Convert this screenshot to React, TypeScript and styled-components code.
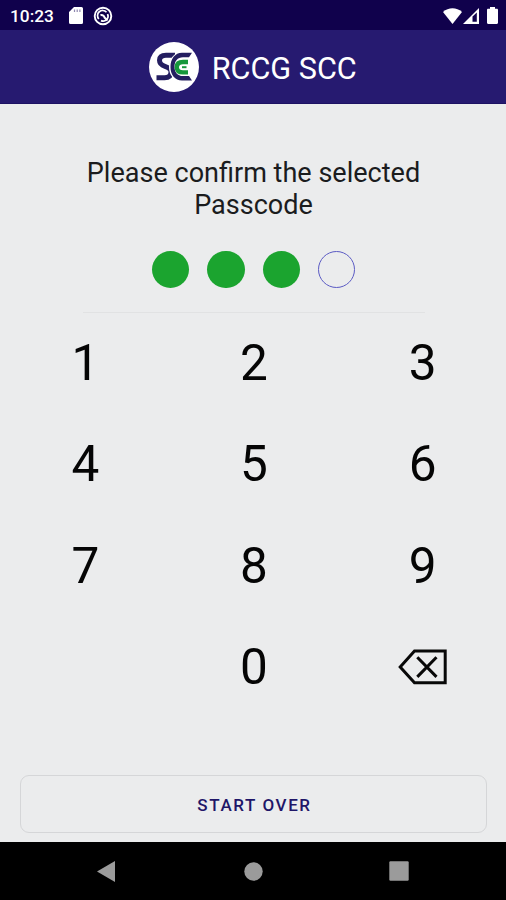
import React, { useState } from 'react';
import styled, { createGlobalStyle } from 'styled-components';

const GlobalStyle = createGlobalStyle`
  * { box-sizing: border-box; }
  html, body { margin: 0; padding: 0; background: #ebeced; }
  body { font-family: Roboto, "Liberation Sans", sans-serif; overflow: hidden; }
  button { font-family: inherit; border: 0; padding: 0; background: none; cursor: pointer; }
  svg { display: block; }
`;

const Screen = styled.div`
  display: flex;
  flex-direction: column;
  width: 506px;
  height: 900px;
  background: #ebeced;
`;

const StatusBar = styled.div`
  display: flex;
  align-items: center;
  justify-content: space-between;
  height: 30px;
  padding: 1px 8px 0 10px;
  background: #10014c;
  color: #fff;
`;

const StatusGroup = styled.div`
  display: flex;
  align-items: center;
`;

const Clock = styled.span`
  width: 58px;
  font-size: 17.3px;
  font-weight: 500;
  line-height: 20px;
  white-space: nowrap;
`;

const StatusIcon = styled.span<{ $before?: number }>`
  margin-left: ${(p) => p.$before ?? 0}px;
`;

const Header = styled.header`
  display: flex;
  align-items: center;
  height: 74px;
  padding: 1px 0 0 149px;
  gap: 12.7px;
  background: #261a70;
  border-bottom: 1px solid #1d1263;
`;

const Title = styled.h1`
  margin: 4px 0 0;
  color: #fff;
  font-size: 30.6px;
  font-weight: 400;
  line-height: 36px;
  white-space: nowrap;
`;

const Content = styled.main`
  display: flex;
  flex: 1;
  flex-direction: column;
  align-items: center;
  padding: 54px 0 9px 1px;
`;

const Prompt = styled.p`
  width: 380px;
  margin: 0;
  color: #1b1c1e;
  font-size: 27.05px;
  line-height: 31.5px;
  text-align: center;
`;

const Dots = styled.div`
  display: flex;
  gap: 18px;
  margin-top: 30.3px;
`;

const Dot = styled.span<{ $filled: boolean }>`
  width: 37.2px;
  height: 37.2px;
  border-radius: 50%;
  border: ${(p) => (p.$filled ? '0' : '1px solid #5b5bc4')};
  background: ${(p) => (p.$filled ? '#1ba42f' : 'transparent')};
`;

const Divider = styled.hr`
  width: 342px;
  height: 1px;
  margin: 24px 0 0;
  border: 0;
  background: #e1e2e3;
`;

const Keypad = styled.div`
  display: grid;
  grid-template-columns: repeat(3, 168.67px);
  grid-auto-rows: 101.3px;
  margin-top: -1px;
  padding-left: 1px;
`;

const Key = styled.button`
  display: flex;
  align-items: center;
  justify-content: center;
  color: #050505;
  font-size: 49.5px;
  line-height: 58px;
`;

const StartOver = styled.button`
  width: 467px;
  height: 58px;
  margin-top: auto;
  padding: 2px 0 0 2px;
  border: 1px solid #d5d6d8;
  border-radius: 9px;
  color: #1f1668;
  font-size: 17px;
  font-weight: 500;
  letter-spacing: 1.6px;
`;

const NavBar = styled.nav`
  display: flex;
  align-items: center;
  height: 58px;
  padding-left: 97px;
  background: #000;
`;

const NavButton = styled.button<{ $before?: number }>`
  display: flex;
  align-items: center;
  height: 58px;
  margin-left: ${(p) => p.$before ?? 0}px;
`;

const Logo = () => (
  <svg width="50" height="50" viewBox="0 0 50 50" fill="none" aria-label="SCC logo">
    <circle cx="25" cy="25" r="25" fill="#fff" />
    <path d="M26 13.2h-9c-4.500 0-6.500 2-6.500 5s2 5 5.500 6.100c4 1.200 6 2.800 6 5.700 0 3.800-2.500 5.700-6.500 5.700H7.500" stroke="#241e60" strokeWidth="5" />
    <path d="M42 13h-8c-7 0-11 5-11 12s4 11.500 11 11.500h8" stroke="#fff" strokeWidth="6" />
    <path d="M43 10.800L40 15.200H34c-5.500 0-8.500 4-8.500 9.500s3 9.300 8.500 9.300h6L43 38.500H33c-7 0-11.500-5.500-11.500-13.500S26 10.800 33 10.800z" fill="#241e60" />
    <path d="M39 20H34c-4 0-6.200 2-6.200 5.200s2.200 5.200 6.200 5.200h5" stroke="#16973b" strokeWidth="4.400" />
    <path d="M33 25.200h4.500" stroke="#16973b" strokeWidth="2" />
  </svg>
);

const SdCardIcon = () => (
  <svg width="14" height="17" viewBox="0 0 14 17">
    <path d="M5 0h7.500A1.500 1.500 0 0 1 14 1.500v14a1.500 1.500 0 0 1-1.500 1.500h-11A1.500 1.500 0 0 1 0 15.500V5z" fill="#fff" />
    <path d="M5.500 2.500v2.500M8.200 2.500v2.500M10.900 2.500v2.500" stroke="#8f88b0" strokeWidth="1.200" />
  </svg>
);

const CaptureIcon = () => (
  <svg width="20" height="20" viewBox="0 0 20 20" fill="none" stroke="#fff">
    <circle cx="10" cy="10" r="8.300" strokeWidth="1.900" />
    <path d="M5.800 13A5 5 0 0 1 13.500 6.200M14.600 8A5 5 0 0 1 8 14.600" strokeWidth="1.700" />
    <path d="M7.500 9.300C9.500 8.500 11.500 10 11.500 11.500L14.500 14.500" strokeWidth="2" />
  </svg>
);

const WifiIcon = () => (
  <svg width="19" height="16" viewBox="0 0 19 16">
    <path d="M0 4C5.500-1 13.500-1 19 4L9.500 16z" fill="#fff" />
  </svg>
);

const SignalIcon = () => (
  <svg width="16" height="16" viewBox="0 0 16 16">
    <path d="M0 16L16 0v16z" fill="#fff" />
    <path d="M9.500 13.800V8.500L13.800 4.500V13.800z" fill="#10014c" />
  </svg>
);

const BatteryIcon = () => (
  <svg width="11" height="17" viewBox="0 0 11 17">
    <path d="M3 0h5v1.800h1.800c.7 0 1.200.5 1.200 1.200v12.800c0 .7-.5 1.200-1.200 1.200H1.200C.5 17 0 16.500 0 15.800V3c0-.7.500-1.200 1.200-1.200H3z" fill="#fff" />
  </svg>
);

const BackspaceIcon = () => (
  <svg width="50" height="36" viewBox="0 0 50 36" fill="none" stroke="#080808" strokeWidth="3">
    <path d="M16.500 2H47.200V33.700H16.500L2.200 17.900z" />
    <path d="M19.300 8.200L38.500 27.900M38.500 8.200L19.300 27.900" />
  </svg>
);

const LENGTH = 4;

export default function App() {
  const [entered, setEntered] = useState(3);
  const press = () => setEntered((n) => Math.min(LENGTH, n + 1));

  return (
    <>
      <GlobalStyle />
      <Screen>
        <StatusBar>
          <StatusGroup>
            <Clock>10:23</Clock>
            <StatusIcon $before={1}><SdCardIcon /></StatusIcon>
            <StatusIcon $before={10}><CaptureIcon /></StatusIcon>
          </StatusGroup>
          <StatusGroup>
            <StatusIcon><WifiIcon /></StatusIcon>
            <StatusIcon $before={1}><SignalIcon /></StatusIcon>
            <StatusIcon $before={8}><BatteryIcon /></StatusIcon>
          </StatusGroup>
        </StatusBar>
        <Header>
          <Logo />
          <Title>RCCG SCC</Title>
        </Header>
        <Content>
          <Prompt>Please confirm the selected Passcode</Prompt>
          <Dots>
            {Array.from({ length: LENGTH }, (_, i) => (
              <Dot key={i} $filled={i < entered} />
            ))}
          </Dots>
          <Divider />
          <Keypad>
            {[1, 2, 3, 4, 5, 6, 7, 8, 9].map((n) => (
              <Key key={n} onClick={press}>{n}</Key>
            ))}
            <span />
            <Key onClick={press}>0</Key>
            <Key aria-label="Delete" onClick={() => setEntered((n) => Math.max(0, n - 1))}>
              <BackspaceIcon />
            </Key>
          </Keypad>
          <StartOver onClick={() => setEntered(0)}>START OVER</StartOver>
        </Content>
        <NavBar>
          <NavButton aria-label="Back">
            <svg width="18" height="21" viewBox="0 0 18 21"><path d="M18 0v21L0 10.500z" fill="#9b9b9b" /></svg>
          </NavButton>
          <NavButton $before={129} aria-label="Home">
            <svg width="19" height="19" viewBox="0 0 19 19"><circle cx="9.500" cy="9.500" r="9.200" fill="#9b9b9b" /></svg>
          </NavButton>
          <NavButton $before={126} aria-label="Recents">
            <svg width="20" height="20" viewBox="0 0 20 20"><rect x=".3" y=".3" width="19.400" height="19.400" rx="1.200" fill="#9b9b9b" /></svg>
          </NavButton>
        </NavBar>
      </Screen>
    </>
  );
}
